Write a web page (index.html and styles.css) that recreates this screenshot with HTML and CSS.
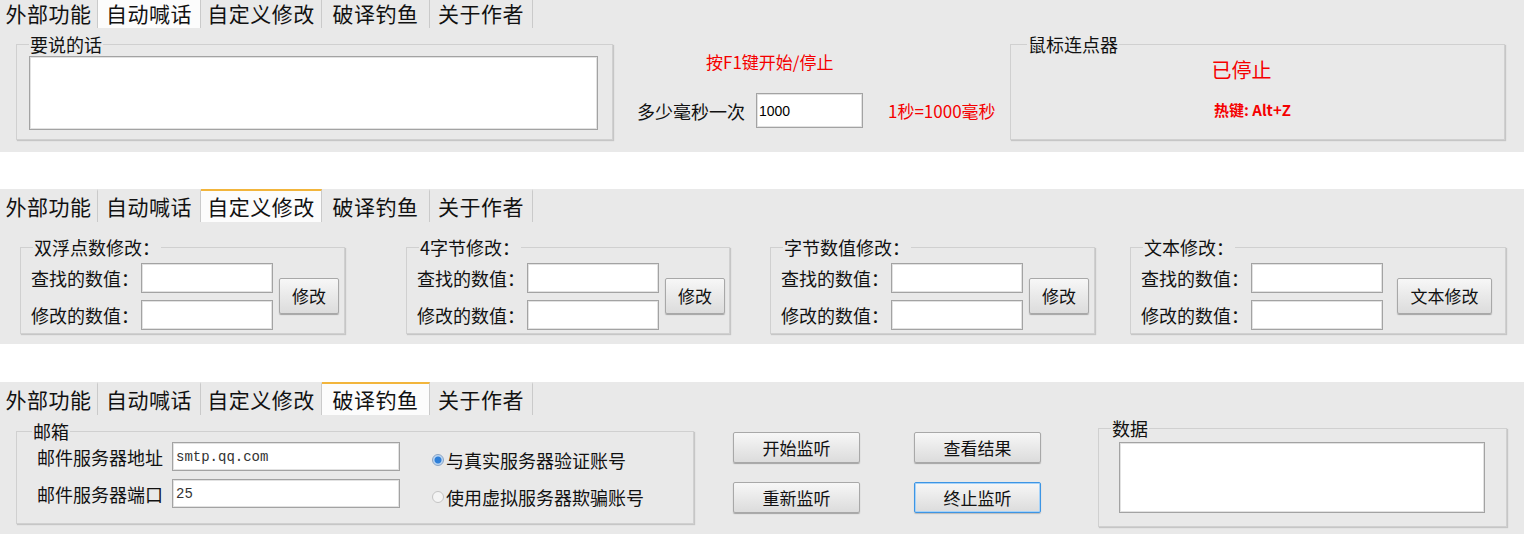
FILE: index.html
```html
<!DOCTYPE html>
<html lang="zh-CN">
<head>
    <meta charset="UTF-8">
    <title>工具</title>
    <link rel="stylesheet" href="styles.css">
</head>
<body>
    <!-- 自动喊话 -->
    <div class="panel panel-talk">
        <div class="tabs">
            <span class="tab">外部功能</span>
            <span class="tab active">自动喊话</span>
            <span class="tab">自定义修改</span>
            <span class="tab">破译钓鱼</span>
            <span class="tab">关于作者</span>
        </div>
        <div class="page page-talk">
            <fieldset class="group group-say">
                <legend>要说的话</legend>
                <textarea class="box box-say"></textarea>
            </fieldset>
            <div class="talk-mid">
                <p class="red-note talk-title">按F1键开始/停止</p>
                <div class="interval-row">
                    <label>多少毫秒一次</label>
                    <input class="field field-ms" value="1000">
                    <span class="red-note ms-note">1秒=1000毫秒</span>
                </div>
            </div>
            <fieldset class="group group-clicker">
                <legend>鼠标连点器</legend>
                <p class="status">已停止</p>
                <p class="hotkey">热键: Alt+Z</p>
            </fieldset>
        </div>
    </div>

    <!-- 自定义修改 -->
    <div class="panel panel-edit">
        <div class="tabs">
            <span class="tab">外部功能</span>
            <span class="tab">自动喊话</span>
            <span class="tab active">自定义修改</span>
            <span class="tab">破译钓鱼</span>
            <span class="tab">关于作者</span>
        </div>
        <div class="page page-edit">
            <fieldset class="group edit-box edit-double">
                <legend>双浮点数修改：</legend>
                <div class="edit-body">
                    <div class="edit-rows">
                        <div class="edit-row"><label>查找的数值：</label><input class="field field-num"></div>
                        <div class="edit-row"><label>修改的数值：</label><input class="field field-num"></div>
                    </div>
                    <button class="btn btn-edit">修改</button>
                </div>
            </fieldset>
            <fieldset class="group edit-box edit-four">
                <legend>4字节修改：</legend>
                <div class="edit-body">
                    <div class="edit-rows">
                        <div class="edit-row"><label>查找的数值：</label><input class="field field-num"></div>
                        <div class="edit-row"><label>修改的数值：</label><input class="field field-num"></div>
                    </div>
                    <button class="btn btn-edit">修改</button>
                </div>
            </fieldset>
            <fieldset class="group edit-box edit-byte">
                <legend>字节数值修改：</legend>
                <div class="edit-body">
                    <div class="edit-rows">
                        <div class="edit-row"><label>查找的数值：</label><input class="field field-num"></div>
                        <div class="edit-row"><label>修改的数值：</label><input class="field field-num"></div>
                    </div>
                    <button class="btn btn-edit">修改</button>
                </div>
            </fieldset>
            <fieldset class="group edit-box edit-text">
                <legend>文本修改：</legend>
                <div class="edit-body">
                    <div class="edit-rows">
                        <div class="edit-row"><label>查找的数值：</label><input class="field field-num"></div>
                        <div class="edit-row"><label>修改的数值：</label><input class="field field-num"></div>
                    </div>
                    <button class="btn btn-edit btn-wide">文本修改</button>
                </div>
            </fieldset>
        </div>
    </div>

    <!-- 破译钓鱼 -->
    <div class="panel panel-fish">
        <div class="tabs">
            <span class="tab">外部功能</span>
            <span class="tab">自动喊话</span>
            <span class="tab">自定义修改</span>
            <span class="tab active">破译钓鱼</span>
            <span class="tab">关于作者</span>
        </div>
        <div class="page page-fish">
            <fieldset class="group group-mail">
                <legend>邮箱</legend>
                <div class="mail-body">
                    <div class="mail-rows">
                        <div class="mail-row"><label>邮件服务器地址</label><input class="field field-mail" value="smtp.qq.com"></div>
                        <div class="mail-row"><label>邮件服务器端口</label><input class="field field-mail" value="25"></div>
                    </div>
                    <div class="radios">
                        <label class="radio-row"><input type="radio" name="mode" checked>与真实服务器验证账号</label>
                        <label class="radio-row"><input type="radio" name="mode">使用虚拟服务器欺骗账号</label>
                    </div>
                </div>
            </fieldset>
            <div class="listen-btns">
                <button class="btn btn-listen">开始监听</button>
                <button class="btn btn-listen">查看结果</button>
                <button class="btn btn-listen">重新监听</button>
                <button class="btn btn-listen focused">终止监听</button>
            </div>
            <fieldset class="group group-data">
                <legend>数据</legend>
                <textarea class="box box-data"></textarea>
            </fieldset>
        </div>
    </div>
</body>
</html>
```

FILE: styles.css
```css
* {
    margin: 0;
    padding: 0;
    box-sizing: border-box;
}

body {
    background: #fff;
    color: #111;
    font-family: "Noto Sans CJK SC", "Noto Sans", sans-serif;
    font-size: 18px;
}

.panel {
    background: #e9e9e9;
    overflow: hidden;
}

.panel-talk {
    margin-top: -3px;
    height: 155px;
}

.panel-talk .tabs {
    height: 31px;
}

.panel-talk .tab {
    line-height: 29px;
}

.panel-edit {
    margin-top: 37px;
    height: 155px;
}

.panel-fish {
    margin-top: 38px;
    height: 160px;
}

/* tab strip */
.tabs {
    display: flex;
    height: 33px;
}

.tab {
    font-size: 21px;
    letter-spacing: 0.5px;
    line-height: 31px;
    text-align: center;
    border-top: 2px solid transparent;
    border-right: 1px solid #cacaca;
}

.tab:nth-child(1) { width: 98px; }
.tab:nth-child(2) { width: 103px; }
.tab:nth-child(3) { width: 121px; }
.tab:nth-child(4) { width: 108px; }
.tab:nth-child(5) { width: 103px; }

.tab.active {
    background: #fcfcfc;
    border-top-color: #f2b53c;
}

/* group boxes */
.group {
    border: 1px solid #d0d0d0;
    box-shadow: 1px 1px 1px rgba(0, 0, 0, 0.15);
    min-width: 0;
}

.group legend {
    font-size: 18px;
    line-height: 18px;
    padding: 0 1px;
}

.field {
    background: #fff;
    border: 1px solid #a3a3a3;
    box-shadow: inset 0 0 0 1px #e2e2e2;
    outline: none;
    font-family: "Liberation Sans", sans-serif;
}

.box {
    display: block;
    background: #fff;
    border: 1px solid #a3a3a3;
    box-shadow: inset 0 0 0 1px #e2e2e2;
    resize: none;
    outline: none;
}

.btn {
    font-family: "Noto Sans CJK SC", sans-serif;
    font-size: 17px;
    color: #111;
    background: linear-gradient(#f7f7f7, #e9e9e9 50%, #dcdcdc);
    border: 1px solid #a8a8a8;
    border-radius: 2px;
    box-shadow: 0 1px 1px rgba(0, 0, 0, 0.3);
}

.red-note {
    color: #f50000;
    font-size: 17px;
    line-height: 18px;
}

/* page 1 */
.page-talk {
    display: flex;
    align-items: flex-start;
    padding-left: 16px;
}

.group-say {
    width: 597px;
    margin-top: 7px;
    padding: 0 14px 9px 12px;
}

.box-say {
    width: 569px;
    height: 74px;
    margin-top: 3px;
}

.talk-mid {
    width: 397px;
    margin-top: 25px;
}

.talk-title {
    margin-left: 93px;
}

.interval-row {
    display: flex;
    align-items: center;
    margin-top: 22px;
    padding-left: 24px;
}

.interval-row label {
    font-size: 18px;
}

.field-ms {
    width: 107px;
    height: 35px;
    margin-left: 11px;
    padding-left: 2px;
    font-size: 14px;
}

.ms-note {
    margin-left: 25px;
}

.group-clicker {
    width: 495px;
    height: 105px;
    margin-top: 7px;
    padding: 0 16px;
}

.status {
    color: #f50000;
    font-size: 20px;
    line-height: 22px;
    text-align: center;
    margin-top: 6px;
    padding-right: 32px;
}

.hotkey {
    color: #f50000;
    font-size: 15px;
    font-weight: bold;
    line-height: 16px;
    text-align: center;
    margin-top: 21px;
    padding-right: 10px;
}

/* page 2 */
.page-edit {
    display: flex;
    align-items: flex-start;
    padding-top: 16px;
}

.edit-box {
    padding: 0 0 3px 10px;
}

.edit-box legend {
    margin-left: 2px;
}

.edit-double { width: 325px; margin-left: 20px; }
.edit-four { width: 324px; margin-left: 61px; }
.edit-byte { width: 325px; margin-left: 40px; }
.edit-text { width: 376px; margin-left: 35px; }

.edit-body {
    display: flex;
    align-items: center;
}

.edit-rows {
    display: flex;
    flex-direction: column;
    gap: 7px;
    margin-top: 7px;
}

.edit-row {
    display: flex;
    align-items: center;
}

.edit-row label {
    width: 110px;
    font-size: 18px;
}

.field-num {
    width: 132px;
    height: 30px;
}

.btn-edit {
    width: 60px;
    height: 36px;
    margin-left: 6px;
    margin-top: 5px;
}

.btn-wide {
    width: 95px;
    margin-left: 14px;
}

/* page 3 */
.page-fish {
    display: flex;
    align-items: flex-start;
    padding-left: 16px;
}

.group-mail {
    width: 678px;
    margin-top: 7px;
    padding: 0 0 12px 20px;
}

.group-mail legend {
    margin-left: -5px;
}

.mail-body {
    display: flex;
    margin-top: 2px;
}

.mail-rows {
    display: flex;
    flex-direction: column;
    gap: 8px;
}

.mail-row {
    display: flex;
    align-items: center;
}

.mail-row label {
    width: 135px;
}

.field-mail {
    width: 228px;
    height: 29px;
    padding-left: 3px;
    font-family: "Liberation Mono", monospace;
    font-size: 14px;
    color: #333;
}

.radios {
    display: flex;
    flex-direction: column;
    gap: 8px;
    margin: 3px 0 0 32px;
}

.radio-row {
    display: flex;
    align-items: center;
    height: 29px;
}

.radio-row input {
    appearance: none;
    width: 12px;
    height: 12px;
    margin-right: 2px;
    border-radius: 50%;
    border: 1px solid #c4c4c4;
    background: #f4f4f4;
}

.radio-row input:checked {
    border-color: #8aa4c4;
    background: radial-gradient(circle, #2f7fd8 0 3px, #bcd6f2 4px);
}

.listen-btns {
    display: grid;
    grid-template-columns: 127px 127px;
    grid-auto-rows: 31px;
    column-gap: 54px;
    row-gap: 19px;
    margin: 17px 0 0 39px;
}

.btn-listen.focused {
    border-color: #3d95e4;
    box-shadow: inset 0 0 0 1px #a6d2f8, 0 1px 1px rgba(0, 0, 0, 0.2);
}

.group-data {
    width: 409px;
    margin: 4px 0 0 57px;
    padding: 0 0 13px 20px;
}

.group-data legend {
    margin-left: -8px;
}

.box-data {
    width: 366px;
    height: 71px;
    margin-top: 5px;
}
```
